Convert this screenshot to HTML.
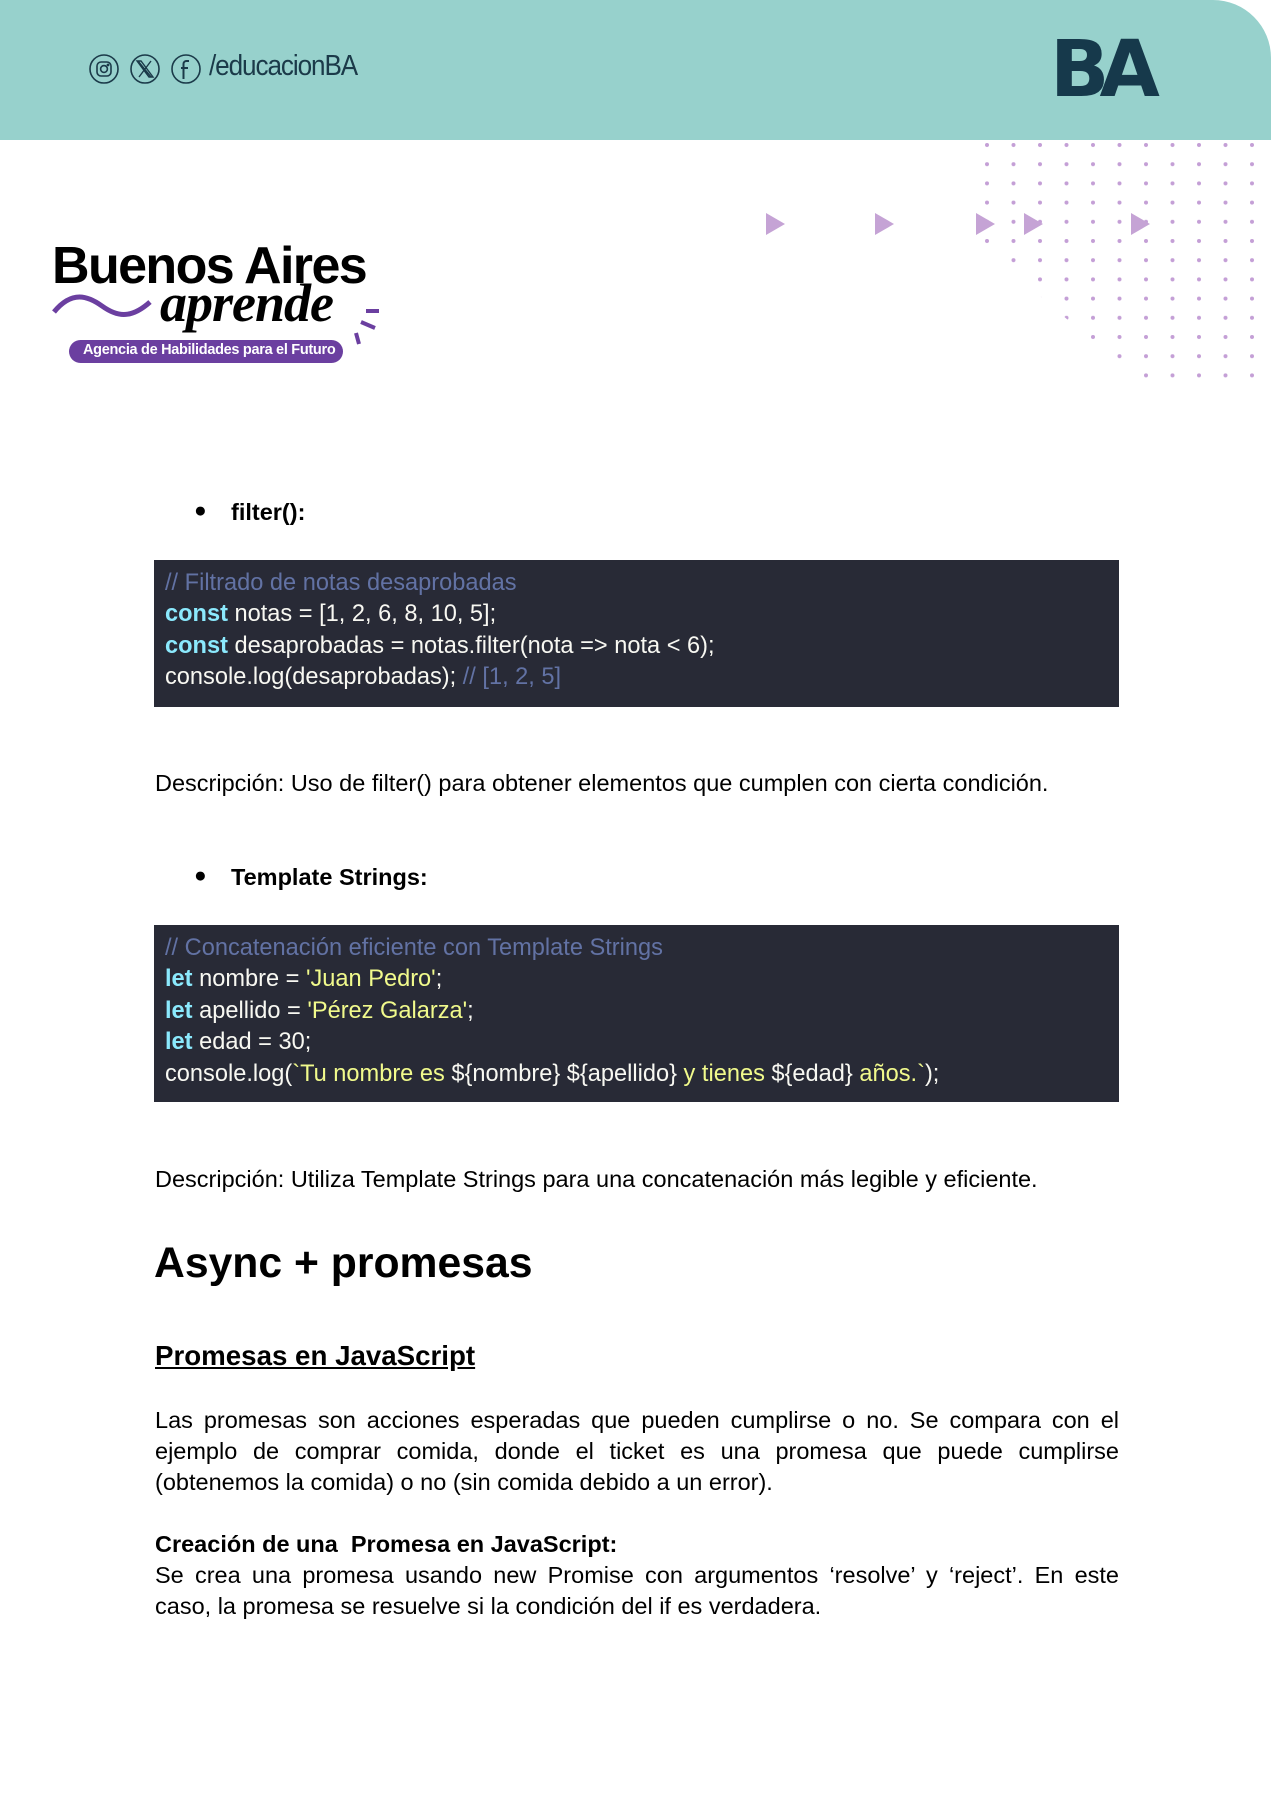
<!DOCTYPE html>
<html><head><meta charset="utf-8"><style>
*{margin:0;padding:0;box-sizing:border-box}
body{width:1274px;height:1800px;background:#fff;position:relative;overflow:hidden;font-family:"Liberation Sans",Arial,sans-serif;color:#000}
.abs{position:absolute;white-space:nowrap}
.hdr{position:absolute;left:0;top:0;width:1271px;height:140px;background:#97d1cc;border-top-right-radius:58px}
.code{position:absolute;left:154px;width:965px;background:#282a36;color:#f8f8f2;font-size:23.6px;padding-left:11px}
.code div{height:31.4px;line-height:31.4px;white-space:nowrap}
.c{color:#6272a4}.k{color:#8be9fd;font-weight:bold}.s{color:#f1fa8c}
.b{font-weight:bold;font-size:23.5px}
.p{position:absolute;left:155px;width:964px;font-size:23.5px;line-height:31px;text-align:justify;text-align-last:left}
</style></head><body>
<div class="hdr"></div>
<svg class="abs" style="left:88px;top:52px" width="120" height="34" viewBox="0 0 120 34" fill="none" stroke="#1b3a49" stroke-width="1.6">
<circle cx="16" cy="17" r="14"/><rect x="9" y="10" width="14" height="14" rx="4"/><circle cx="16" cy="17" r="3.4"/><circle cx="20" cy="13" r=".6" fill="#1b3a49"/>
<circle cx="57" cy="17" r="14"/><path d="M50 9l13 16M63 9L51 25M49 9h4l12 16h-4z" stroke-width="1.4"/>
<circle cx="98" cy="17" r="14"/><path d="M101 9h-2.5a3 3 0 0 0-3 3V27M93 16h7" stroke-width="2"/>
</svg>
<div class="abs" style="left:209px;top:50px;font-size:29px;color:#1b3a49;letter-spacing:-1.2px;transform:scaleX(.9);transform-origin:left">/educacionBA</div>
<div class="abs" style="left:1050px;top:30px;font-size:78px;font-weight:900;color:#16394b;letter-spacing:-10px;font-family:'DejaVu Sans',sans-serif;line-height:80px">BA</div>
<svg class="abs" style="left:0;top:0" width="1274" height="400">
<defs><pattern id="d" x="985" y="143" width="26.5" height="19.2" patternUnits="userSpaceOnUse"><circle cx="2" cy="2" r="2" fill="#c49fd6"/></pattern></defs>
<polygon points="985,143 1255,143 1255,378 1135,378 1010,270 985,250" fill="url(#d)"/>
<g fill="#c5a3d5"><path d="M766 213l19 11-19 11z"/><path d="M875 213l19 11-19 11z"/><path d="M976 213l19 11-19 11z"/><path d="M1024 213l19 11-19 11z"/><path d="M1131 213l19 11-19 11z"/></g>
<path d="M54 312c18-22 34-16 48-6s28 14 48-4" stroke="#6b3fa0" stroke-width="5" fill="none"/>
<path d="M366 311h13M361 322l14 6M356 333l3 11" stroke="#6b3fa0" stroke-width="4"/>
<rect x="69" y="340" width="274" height="23" rx="11.5" fill="#6b3fa0"/>
</svg>
<div class="abs" style="left:52px;top:236px;font-size:52px;font-weight:bold;letter-spacing:-1.6px">Buenos Aires</div>
<div class="abs" style="left:160px;top:272px;font-size:54px;font-style:italic;font-weight:bold;font-family:'Liberation Serif',serif;letter-spacing:-1px">aprende</div>
<div class="abs" style="left:83px;top:342px;font-size:14.5px;font-weight:bold;color:#fff;letter-spacing:-.3px">Agencia de Habilidades para el Futuro</div>

<div class="abs" style="left:194px;top:499px;font-size:21px">●</div><div class="abs b" style="left:231px;top:499px">filter():</div>
<div class="code" style="top:560px;height:147px;padding-top:8px">
<div class="c">// Filtrado de notas desaprobadas</div>
<div><span class="k">const</span> notas = [1, 2, 6, 8, 10, 5];</div>
<div><span class="k">const</span> desaprobadas = notas.filter(nota =&gt; nota &lt; 6);</div>
<div>console.log(desaprobadas); <span class="c">// [1, 2, 5]</span></div>
</div>
<div class="abs" style="left:155px;top:770px;font-size:23.5px">Descripción: Uso de filter() para obtener elementos que cumplen con cierta condición.</div>
<div class="abs" style="left:194px;top:864px;font-size:21px">●</div><div class="abs b" style="left:231px;top:864px">Template Strings:</div>
<div class="code" style="top:925px;height:177px;padding-top:8px">
<div class="c">// Concatenación eficiente con Template Strings</div>
<div><span class="k">let</span> nombre = <span class="s">'Juan Pedro'</span>;</div>
<div><span class="k">let</span> apellido = <span class="s">'Pérez Galarza'</span>;</div>
<div><span class="k">let</span> edad = 30;</div>
<div>console.log(<span class="s">`Tu nombre es </span>${nombre} ${apellido}<span class="s"> y tienes </span>${edad}<span class="s"> años.`</span>);</div>
</div>
<div class="abs" style="left:155px;top:1166px;font-size:23.5px">Descripción: Utiliza Template Strings para una concatenación más legible y eficiente.</div>
<div class="abs" style="left:154px;top:1239px;font-size:42.7px;font-weight:bold">Async + promesas</div>
<div class="abs" style="left:155px;top:1340px;font-size:27.7px;font-weight:bold;text-decoration:underline">Promesas en JavaScript</div>
<div class="p" style="top:1405px">Las promesas son acciones esperadas que pueden cumplirse o no. Se compara con el ejemplo de comprar comida, donde el ticket es una promesa que puede cumplirse (obtenemos la comida) o no (sin comida debido a un error).</div>
<div class="p" style="top:1529px"><b>Creación de una&nbsp; Promesa en JavaScript:</b><br>Se crea una promesa usando new Promise con argumentos ‘resolve’ y ‘reject’. En este caso, la promesa se resuelve si la condición del if es verdadera.</div>
</body></html>
